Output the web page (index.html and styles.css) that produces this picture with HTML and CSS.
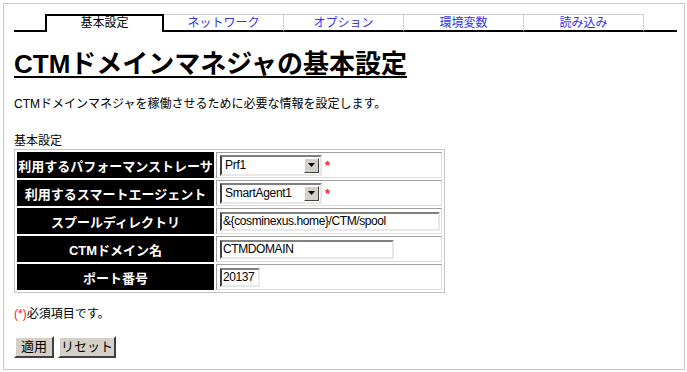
FILE: index.html
```html
<!DOCTYPE html>
<html lang="ja">
<head>
    <meta charset="UTF-8">
    <title>CTMドメインマネジャの基本設定</title>
    <link rel="stylesheet" href="styles.css">
</head>
<body>

    <div class="page">
        <div class="tabs">
            <div class="tab-fill tab-fill-left"></div>
            <div class="tab active">基本設定</div>
            <a class="tab" href="#">ネットワーク</a>
            <a class="tab" href="#">オプション</a>
            <a class="tab" href="#">環境変数</a>
            <a class="tab" href="#">読み込み</a>
            <div class="tab-fill tab-fill-right"></div>
        </div>

        <h1>CTMドメインマネジャの基本設定</h1>

        <p class="desc">CTMドメインマネジャを稼働させるために必要な情報を設定します。</p>

        <div class="caption">基本設定</div>
        <table class="settings">
            <colgroup>
                <col class="col-label">
                <col class="col-value">
            </colgroup>
            <tr>
                <th>利用するパフォーマンストレーサ</th>
                <td>
                    <span class="select">
                        <span class="select-value">Prf1</span>
                        <span class="select-btn"><svg width="7" height="4" viewBox="0 0 7 4"><path d="M0 0h7L3.5 4z" fill="#000"/></svg></span>
                    </span><span class="req">*</span>
                </td>
            </tr>
            <tr>
                <th>利用するスマートエージェント</th>
                <td>
                    <span class="select">
                        <span class="select-value">SmartAgent1</span>
                        <span class="select-btn"><svg width="7" height="4" viewBox="0 0 7 4"><path d="M0 0h7L3.5 4z" fill="#000"/></svg></span>
                    </span><span class="req">*</span>
                </td>
            </tr>
            <tr>
                <th>スプールディレクトリ</th>
                <td><input class="field field-long" type="text" value="&amp;{cosminexus.home}/CTM/spool"></td>
            </tr>
            <tr>
                <th>CTMドメイン名</th>
                <td><input class="field field-mid" type="text" value="CTMDOMAIN"></td>
            </tr>
            <tr>
                <th>ポート番号</th>
                <td><input class="field field-short" type="text" value="20137"></td>
            </tr>
        </table>

        <p class="note"><span class="req-text">(*)</span>必須項目です。</p>

        <div class="buttons">
            <button class="btn btn-apply">適用</button>
            <button class="btn btn-reset">リセット</button>
        </div>
    </div>

</body>
</html>
```

FILE: styles.css
```css
/* 基本 */
body {
    margin: 0;
    background: #ffffff;
    color: #000000;
    font-family: "Liberation Sans", "Noto Sans CJK JP", sans-serif;
    font-size: 12px;
}

.page {
    margin: 3px;
    width: 682px;
    height: 367px;
    box-sizing: border-box;
    border: 1px solid #c8c8c8;
    padding: 0 7px 0 10px;
}

/* タブ */
.tabs {
    display: flex;
    margin-top: 10px;
    height: 18px;
}

.tab-fill {
    border-bottom: 2px solid #000;
}

.tab-fill-left {
    width: 31px;
}

.tab-fill-right {
    flex: 1;
}

.tab {
    width: 120px;
    box-sizing: border-box;
    text-align: center;
    font-size: 12px;
    line-height: 13px;
    color: #3535f0;
    text-decoration: none;
    border: 1px solid #cfcfcf;
    border-left: none;
    border-bottom: 2px solid #000;
    padding-top: 2px;
}

.tab.active {
    width: 119px;
    color: #000;
    border: 2px solid #000;
    border-bottom: none;
    padding-top: 1px;
}

/* 見出し */
h1 {
    margin: 15px 0 0;
    font-size: 26px;
    line-height: 34px;
    font-weight: bold;
    text-decoration: underline;
    text-decoration-thickness: 2px;
    text-underline-offset: 3px;
}

.desc {
    margin: 15px 0 0;
    line-height: 16px;
}

.caption {
    margin-top: 21px;
    line-height: 16px;
}

/* 設定テーブル */
.settings {
    border: 1px solid #c4c4c4;
    border-spacing: 2px;
    width: 431px;
    table-layout: fixed;
}

.col-label {
    width: 197px;
}

.col-value {
    width: 226px;
}

.settings th {
    height: 26px;
    box-sizing: border-box;
    padding: 0;
    background: #000;
    color: #fff;
    font-size: 13px;
    font-weight: bold;
    white-space: nowrap;
    overflow: hidden;
    text-align: center;
}

.settings td {
    height: 26px;
    box-sizing: border-box;
    padding: 0 0 0 3px;
    border: 1px solid;
    border-color: #a0a0a0 #dcdcdc #dcdcdc #a0a0a0;
    white-space: nowrap;
}

/* セレクト */
.select {
    display: inline-flex;
    align-items: center;
    vertical-align: middle;
    width: 102px;
    height: 21px;
    box-sizing: border-box;
    border: 2px solid;
    border-color: #808080 #e8e8e8 #e8e8e8 #404040;
    background: #fff;
    font-size: 12px;
    letter-spacing: -0.3px;
}

.select-value {
    flex: 1;
    padding-left: 3px;
}

.select-btn {
    display: flex;
    align-items: center;
    justify-content: center;
    width: 15px;
    height: 15px;
    box-sizing: border-box;
    margin-right: 1px;
    background: #d4d0c8;
    border: 1px solid;
    border-color: #ffffff #404040 #404040 #ffffff;
}

.req {
    color: #ff2020;
    font-size: 13px;
    font-weight: bold;
    margin-left: 3px;
    vertical-align: middle;
}

/* 入力 */
.field {
    height: 19px;
    box-sizing: border-box;
    border: 2px solid;
    border-color: #808080 #e8e8e8 #e8e8e8 #404040;
    padding: 0 1px;
    font-family: "Liberation Sans", sans-serif;
    font-size: 12px;
    letter-spacing: -0.4px;
    color: #000;
    vertical-align: middle;
}

.field-long {
    width: 220px;
}

.field-mid {
    width: 174px;
}

.field-short {
    width: 40px;
}

/* 注記 */
.note {
    margin: 13px 0 0;
    line-height: 16px;
}

.req-text {
    color: #ff2020;
}

/* ボタン */
.buttons {
    display: flex;
    gap: 4px;
    margin-top: 14px;
}

.btn {
    height: 22px;
    box-sizing: border-box;
    padding: 0;
    background: #d4d0c8;
    border: 2px solid;
    border-color: #ffffff #404040 #404040 #ffffff;
    font-family: "Liberation Sans", "Noto Sans CJK JP", sans-serif;
    font-size: 13px;
    line-height: 16px;
    color: #000;
}

.btn-apply {
    width: 40px;
}

.btn-reset {
    width: 58px;
}
```
